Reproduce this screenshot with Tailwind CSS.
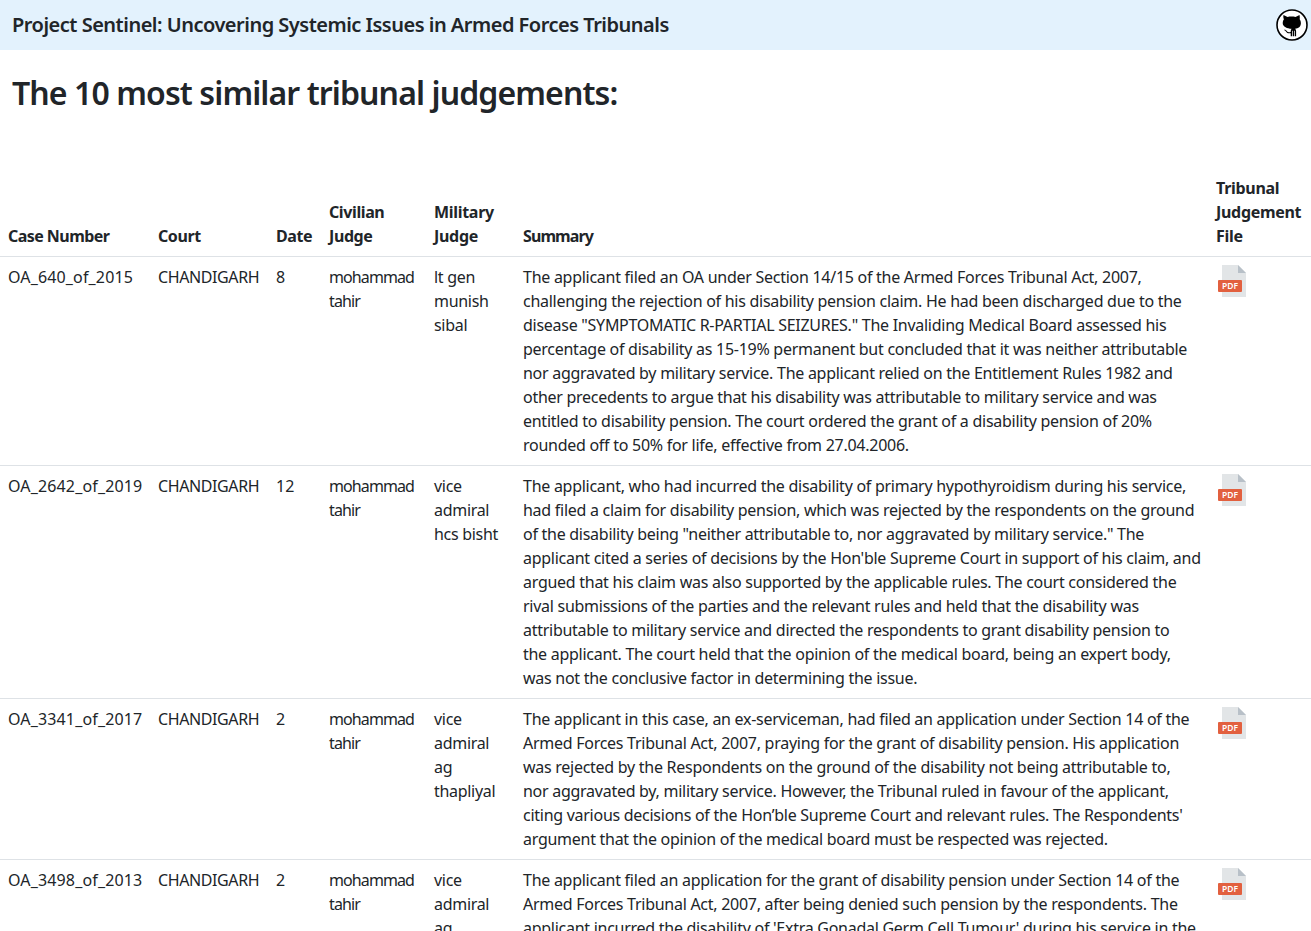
<!DOCTYPE html>
<html lang="en">
<head>
	<title>Project Sentinel</title>
	<meta charset="UTF-8"/>
	<script src="https://cdn.jsdelivr.net/npm/@tailwindcss/browser@4"></script>
</head>
<body class="h-[931px] overflow-hidden bg-white text-[#212529] font-['Noto_Sans',sans-serif] text-[16px] leading-6">
	<!-- Navbar -->
	<nav class="h-[50px] bg-[#e3f2fd] flex items-center justify-between pl-3 pr-[2px]">
		<span class="text-[20px] font-semibold tracking-[-0.5px]">Project Sentinel: Uncovering Systemic Issues in Armed Forces Tribunals</span>
		<svg width="34" height="34" viewBox="0 0 34 34">
			<circle cx="17" cy="17" r="15" fill="white" stroke="black" stroke-width="1.600"/>
			<path d="M8.500 7l4 2c2.500-.6 5.500-.6 8 0l4-2c.4 1.500.4 3 .2 4.300.8 1 1.200 2.300 1.200 3.700 0 3.800-2.500 5.400-5.800 5.800.6.5 1 1.300 1 2.400v5h-1.400v-5.500h-.7v5.500h-1.300v-5.500h-.7v5.500h-1.300v-3c-2.500.5-3.800-.3-4.800-1.800-.5-.8-1.200-1.300-2-1.500 1.300-.4 2.300.3 3 1.300.8 1 1.800 1.200 3.800.8-.1-1.300.2-2.400.8-3.200-4-.3-8.800-1.800-8.800-5.800 0-1.400.4-2.700 1.200-3.700C8.300 10 8.200 8.500 8.500 7z" fill="black"/>
		</svg>
	</nav>

	<h1 class="text-[32px] leading-[38px] font-semibold tracking-[-0.9px] px-3 pt-6 pb-[56px]">The 10 most similar tribunal judgements:</h1>

	<table class="w-[1311px] table-fixed border-collapse">
		<colgroup>
			<col class="w-[150px]"><col class="w-[118px]"><col class="w-[53px]"><col class="w-[105px]"><col class="w-[89px]"><col class="w-[693px]"><col class="w-[103px]">
		</colgroup>
		<thead>
			<tr class="border-b border-[#dee2e6] align-bottom text-left">
				<th class="p-2 font-bold tracking-[-0.55px]">Case Number</th>
				<th class="p-2 font-bold tracking-[-0.4px]">Court</th>
				<th class="p-2 font-bold tracking-[-0.4px]">Date</th>
				<th class="p-2 font-bold tracking-[-0.4px]">Civilian Judge</th>
				<th class="p-2 font-bold tracking-[-0.3px]">Military Judge</th>
				<th class="p-2 font-bold tracking-[-0.9px]">Summary</th>
				<th class="p-2 font-bold tracking-[-0.3px]">Tribunal Judgement File</th>
			</tr>
		</thead>
		<tbody class="align-top">
			<tr class="border-b border-[#dee2e6]">
				<td class="p-2 tracking-[0.15px]">OA_640_of_2015</td>
				<td class="p-2 tracking-[-0.4px]">CHANDIGARH</td>
				<td class="p-2">8</td>
				<td class="p-2 tracking-[-0.9px]">mohammad tahir</td>
				<td class="p-2 tracking-[-0.3px]">lt gen munish sibal</td>
				<td class="p-2 tracking-[-0.27px] whitespace-nowrap">The applicant filed an OA under Section 14/15 of the Armed Forces Tribunal Act, 2007,<br>challenging the rejection of his disability pension claim. He had been discharged due to the<br>disease "SYMPTOMATIC R-PARTIAL SEIZURES." The Invaliding Medical Board assessed his<br>percentage of disability as 15-19% permanent but concluded that it was neither attributable<br>nor aggravated by military service. The applicant relied on the Entitlement Rules 1982 and<br>other precedents to argue that his disability was attributable to military service and was<br>entitled to disability pension. The court ordered the grant of a disability pension of 20%<br>rounded off to 50% for life, effective from 27.04.2006.</td>
				<td class="p-2">
					<svg width="32" height="32" viewBox="0 0 32 32"><path d="M6 0h16l8 8v24H6z" fill="#e2e5e7"/><path d="M22 0l8 8h-8z" fill="#b8c0c8"/><rect x="2" y="15" width="24" height="12" rx="1" fill="#e2603f"/><text x="14" y="24" text-anchor="middle" font-size="8.500" font-weight="600" fill="white">PDF</text></svg>
				</td>
			</tr>
			<tr class="border-b border-[#dee2e6]">
				<td class="p-2 tracking-[0.15px]">OA_2642_of_2019</td>
				<td class="p-2 tracking-[-0.4px]">CHANDIGARH</td>
				<td class="p-2">12</td>
				<td class="p-2 tracking-[-0.9px]">mohammad tahir</td>
				<td class="p-2 tracking-[-0.3px]">vice admiral hcs bisht</td>
				<td class="p-2 tracking-[-0.27px] whitespace-nowrap">The applicant, who had incurred the disability of primary hypothyroidism during his service,<br>had filed a claim for disability pension, which was rejected by the respondents on the ground<br>of the disability being "neither attributable to, nor aggravated by military service." The<br>applicant cited a series of decisions by the Hon'ble Supreme Court in support of his claim, and<br>argued that his claim was also supported by the applicable rules. The court considered the<br>rival submissions of the parties and the relevant rules and held that the disability was<br>attributable to military service and directed the respondents to grant disability pension to<br>the applicant. The court held that the opinion of the medical board, being an expert body,<br>was not the conclusive factor in determining the issue.</td>
				<td class="p-2">
					<svg width="32" height="32" viewBox="0 0 32 32"><path d="M6 0h16l8 8v24H6z" fill="#e2e5e7"/><path d="M22 0l8 8h-8z" fill="#b8c0c8"/><rect x="2" y="15" width="24" height="12" rx="1" fill="#e2603f"/><text x="14" y="24" text-anchor="middle" font-size="8.500" font-weight="600" fill="white">PDF</text></svg>
				</td>
			</tr>
			<tr class="border-b border-[#dee2e6]">
				<td class="p-2 tracking-[0.15px]">OA_3341_of_2017</td>
				<td class="p-2 tracking-[-0.4px]">CHANDIGARH</td>
				<td class="p-2">2</td>
				<td class="p-2 tracking-[-0.9px]">mohammad tahir</td>
				<td class="p-2 tracking-[-0.3px]">vice admiral ag thapliyal</td>
				<td class="p-2 tracking-[-0.27px] whitespace-nowrap">The applicant in this case, an ex-serviceman, had filed an application under Section 14 of the<br>Armed Forces Tribunal Act, 2007, praying for the grant of disability pension. His application<br>was rejected by the Respondents on the ground of the disability not being attributable to,<br>nor aggravated by, military service. However, the Tribunal ruled in favour of the applicant,<br>citing various decisions of the Hon’ble Supreme Court and relevant rules. The Respondents'<br>argument that the opinion of the medical board must be respected was rejected.</td>
				<td class="p-2">
					<svg width="32" height="32" viewBox="0 0 32 32"><path d="M6 0h16l8 8v24H6z" fill="#e2e5e7"/><path d="M22 0l8 8h-8z" fill="#b8c0c8"/><rect x="2" y="15" width="24" height="12" rx="1" fill="#e2603f"/><text x="14" y="24" text-anchor="middle" font-size="8.500" font-weight="600" fill="white">PDF</text></svg>
				</td>
			</tr>
			<tr class="border-b border-[#dee2e6]">
				<td class="p-2 tracking-[0.15px]">OA_3498_of_2013</td>
				<td class="p-2 tracking-[-0.4px]">CHANDIGARH</td>
				<td class="p-2">2</td>
				<td class="p-2 tracking-[-0.9px]">mohammad tahir</td>
				<td class="p-2 tracking-[-0.3px]">vice admiral ag thapliyal</td>
				<td class="p-2 tracking-[-0.27px] whitespace-nowrap">The applicant filed an application for the grant of disability pension under Section 14 of the<br>Armed Forces Tribunal Act, 2007, after being denied such pension by the respondents. The<br>applicant incurred the disability of 'Extra Gonadal Germ Cell Tumour' during his service in the</td>
				<td class="p-2">
					<svg width="32" height="32" viewBox="0 0 32 32"><path d="M6 0h16l8 8v24H6z" fill="#e2e5e7"/><path d="M22 0l8 8h-8z" fill="#b8c0c8"/><rect x="2" y="15" width="24" height="12" rx="1" fill="#e2603f"/><text x="14" y="24" text-anchor="middle" font-size="8.500" font-weight="600" fill="white">PDF</text></svg>
				</td>
			</tr>
		</tbody>
	</table>
</body>
</html>
